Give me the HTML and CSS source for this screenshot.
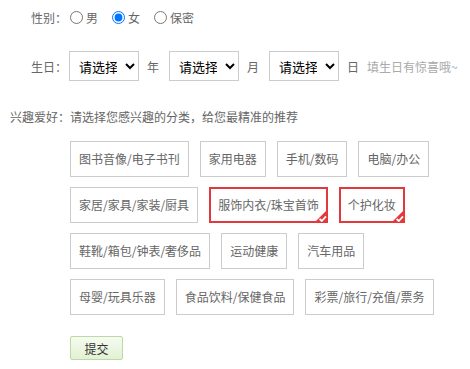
FILE: index.html
```html
<!DOCTYPE html>
<html lang="zh-CN">

<head>
    <meta charset="UTF-8">
    <title>个人信息</title>
    <link rel="stylesheet" href="styles.css">
</head>

<body>
    <form class="profile-form">
        <div class="field field-gender">
            <span class="field-label">性别<span class="colon">：</span></span>
            <label class="radio-item"><input type="radio" name="sex">男</label>
            <label class="radio-item"><input type="radio" name="sex" checked>女</label>
            <label class="radio-item"><input type="radio" name="sex">保密</label>
        </div>

        <div class="field field-birth">
            <span class="field-label">生日<span class="colon">：</span></span>
            <select class="date-select">
                <option>请选择</option>
            </select>
            <span class="unit">年</span>
            <select class="date-select">
                <option>请选择</option>
            </select>
            <span class="unit">月</span>
            <select class="date-select">
                <option>请选择</option>
            </select>
            <span class="unit">日</span>
            <span class="hint">填生日有惊喜哦~</span>
        </div>

        <p class="interest-title">兴趣爱好<span class="colon">：</span>请选择您感兴趣的分类，给您最精准的推荐</p>

        <div class="tag-list">
            <span class="tag">图书音像/电子书刊</span>
            <span class="tag">家用电器</span>
            <span class="tag">手机/数码</span>
            <span class="tag">电脑/办公</span>
            <span class="tag">家居/家具/家装/厨具</span>
            <span class="tag selected">服饰内衣/珠宝首饰
                <svg class="tick" width="12" height="12" viewBox="0 0 12 12">
                    <path d="M12 0V12H0Z" fill="#e4393c" />
                    <path d="M4.6 9L6.8 11L11 6.4" stroke="#fff" stroke-width="1.7" fill="none" />
                </svg>
            </span>
            <span class="tag selected">个护化妆
                <svg class="tick" width="12" height="12" viewBox="0 0 12 12">
                    <path d="M12 0V12H0Z" fill="#e4393c" />
                    <path d="M4.6 9L6.8 11L11 6.4" stroke="#fff" stroke-width="1.7" fill="none" />
                </svg>
            </span>
            <span class="tag">鞋靴/箱包/钟表/奢侈品</span>
            <span class="tag">运动健康</span>
            <span class="tag">汽车用品</span>
            <span class="tag">母婴/玩具乐器</span>
            <span class="tag">食品饮料/保健食品</span>
            <span class="tag">彩票/旅行/充值/票务</span>
        </div>

        <button type="button" class="submit-btn">提交</button>
    </form>
</body>

</html>
```

FILE: styles.css
```css
body {
    margin: 0;
    font-family: "Noto Sans CJK SC", sans-serif;
    font-size: 12px;
    color: #666;
    background: #fff;
}

.profile-form {
    padding-top: 7px;
}

.field {
    display: flex;
    align-items: center;
}

.field-label {
    width: 67px;
    text-align: right;
}

/* centred full-width colon */
.colon {
    font-family: "Noto Sans CJK TC", sans-serif;
}

.field-gender {
    height: 20px;
}

.radio-item {
    display: flex;
    align-items: center;
    margin-right: 11px;
}

.radio-item input {
    width: 13px;
    height: 13px;
    margin: 0 3px 0 3px;
}

.field-birth {
    height: 30px;
    margin-top: 24px;
}

.date-select {
    width: 70px;
    height: 30px;
    padding: 0 5px;
    border: 1px solid #ccc;
    border-radius: 0;
    background: #fff;
    font-family: "Noto Sans CJK SC", sans-serif;
    font-size: 13px;
    color: #000;
    margin-left: 2px;
}

.unit {
    margin: 0 8px 0 8px;
}

.hint {
    color: #aaa;
}

.interest-title {
    margin: 26px 0 0 10px;
    line-height: 20px;
}

.tag-list {
    display: flex;
    flex-wrap: wrap;
    gap: 10px 11px;
    margin-top: 14px;
    padding-left: 70px;
    width: 370px;
}

.tag {
    position: relative;
    height: 34px;
    line-height: 34px;
    padding: 0 8px;
    border: 1px solid #ccc;
}

.tag.selected {
    border-color: #e4393c;
    box-shadow: inset 0 0 0 1px #e4393c;
}

.tick {
    position: absolute;
    right: 0;
    bottom: 0;
}

.submit-btn {
    display: block;
    margin: 21px 0 0 70px;
    width: 53px;
    height: 24px;
    padding: 0;
    border: 1px solid #bcd9a6;
    border-radius: 2px;
    background: linear-gradient(#f6fbf0, #e2f1d3);
    font-family: "Noto Sans CJK SC", sans-serif;
    font-size: 12px;
    color: #333;
}
```
